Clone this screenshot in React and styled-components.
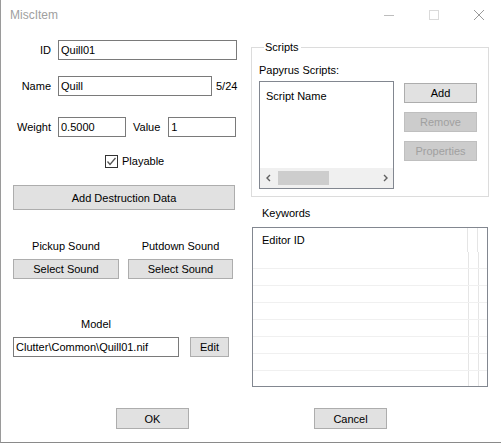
import React from "react";
import styled, { createGlobalStyle } from "styled-components";

const GlobalStyle = createGlobalStyle`
  html, body {
    margin: 0;
    padding: 0;
    background: #fff;
  }
  * {
    box-sizing: border-box;
  }
`;

function App() {
  return (
    <Window>
      <GlobalStyle />
      <TitleBar>
        <Title>MiscItem</Title>
        <Caption>
          <CaptionButton>
            <svg width="10" height="10" viewBox="0 0 10 10">
              <path d="M0 5.5h10" stroke="#bdbdbd" strokeWidth="1" />
            </svg>
          </CaptionButton>
          <CaptionButton>
            <svg width="10" height="10" viewBox="0 0 10 10">
              <rect x="0.5" y="0.5" width="9" height="9" fill="none" stroke="#dadada" />
            </svg>
          </CaptionButton>
          <CaptionButton>
            <svg width="10" height="10" viewBox="0 0 10 10">
              <path d="M0 0L10 10M10 0L0 10" stroke="#9a9a9a" strokeWidth="1" />
            </svg>
          </CaptionButton>
        </Caption>
      </TitleBar>

      <Content>
        <LeftColumn>
          <FieldRow $top={10}>
            <Label>ID</Label>
            <TextInput $width={179} defaultValue="Quill01" />
          </FieldRow>
          <FieldRow $top={16}>
            <Label>Name</Label>
            <TextInput $width={154} defaultValue="Quill" />
            <Counter>5/24</Counter>
          </FieldRow>
          <FieldRow $top={21}>
            <Label>Weight</Label>
            <TextInput $width={68} defaultValue="0.5000" />
            <InlineLabel>Value</InlineLabel>
            <TextInput $width={68} defaultValue="1" />
          </FieldRow>
          <CheckRow>
            <CheckBox>
              <svg width="11" height="11" viewBox="0 0 11 11">
                <path d="M1.5 5.5L4 8.5L9.5 2" fill="none" stroke="#555" strokeWidth="1.3" />
              </svg>
            </CheckBox>
            <span>Playable</span>
          </CheckRow>
          <WideButton>Add Destruction Data</WideButton>

          <SoundRow>
            <SoundBlock $width={106}>
              <CenterLabel>Pickup Sound</CenterLabel>
              <Button $width={106}>Select Sound</Button>
            </SoundBlock>
            <SoundBlock $width={105}>
              <CenterLabel>Putdown Sound</CenterLabel>
              <Button $width={105}>Select Sound</Button>
            </SoundBlock>
          </SoundRow>

          <ModelBlock>
            <ModelLabel>Model</ModelLabel>
            <ModelRow>
              <TextInput $width={166} defaultValue="Clutter\Common\Quill01.nif" />
              <Button $width={39}>Edit</Button>
            </ModelRow>
          </ModelBlock>
        </LeftColumn>

        <RightColumn>
          <GroupBox>
            <Legend>Scripts</Legend>
            <GroupLabel>Papyrus Scripts:</GroupLabel>
            <ScriptsRow>
              <ListBox $width={135} $height={108}>
                <ScriptHeader>Script Name</ScriptHeader>
                <HScroll>
                  <ScrollArrow>
                    <svg width="8" height="8" viewBox="0 0 8 8">
                      <path d="M5 1L2 4L5 7" fill="none" stroke="#606060" strokeWidth="1.4" />
                    </svg>
                  </ScrollArrow>
                  <ScrollTrack>
                    <ScrollThumb />
                  </ScrollTrack>
                  <ScrollArrow>
                    <svg width="8" height="8" viewBox="0 0 8 8">
                      <path d="M3 1L6 4L3 7" fill="none" stroke="#606060" strokeWidth="1.4" />
                    </svg>
                  </ScrollArrow>
                </HScroll>
              </ListBox>
              <ButtonStack>
                <Button $width={73}>Add</Button>
                <Button $width={73} disabled>
                  Remove
                </Button>
                <Button $width={73} disabled>
                  Properties
                </Button>
              </ButtonStack>
            </ScriptsRow>
          </GroupBox>

          <KeywordsLabel>Keywords</KeywordsLabel>
          <KeywordList $width={236} $height={160}>
            <GridHeader>
              <GridCell $width={215}>Editor ID</GridCell>
              <GridCell $width={3} />
            </GridHeader>
            {Array.from({ length: 8 }).map((_, i) => (
              <GridRow key={i}>
                <GridCell $width={216} />
                <GridCell $width={4} />
              </GridRow>
            ))}
          </KeywordList>
        </RightColumn>
      </Content>

      <Footer>
        <Button $width={73} $height={21}>
          OK
        </Button>
        <Button $width={73} $height={21}>
          Cancel
        </Button>
      </Footer>
    </Window>
  );
}

export default App;

const Window = styled.div`
  width: 501px;
  height: 443px;
  background: #fff;
  border-left: 1px solid #9a9a9a;
  border-bottom: 1px solid #8a8a8a;
  font-family: "Liberation Sans", Arial, sans-serif;
  font-size: 11px;
  color: #000;
  display: flex;
  flex-direction: column;
  overflow: hidden;
`;

const TitleBar = styled.div`
  height: 30px;
  display: flex;
  align-items: center;
  justify-content: space-between;
  flex-shrink: 0;
`;

const Title = styled.div`
  padding-left: 9px;
  font-size: 12px;
  color: #a0a0a0;
`;

const Caption = styled.div`
  display: flex;
  height: 30px;
`;

const CaptionButton = styled.div`
  width: 45px;
  height: 30px;
  display: flex;
  align-items: center;
  justify-content: center;
`;

const Content = styled.div`
  display: grid;
  grid-template-columns: 237px 250px;
  padding-left: 12px;
  align-items: start;
`;

const LeftColumn = styled.div`
  display: flex;
  flex-direction: column;
`;

const RightColumn = styled.div`
  display: flex;
  flex-direction: column;
`;

const FieldRow = styled.div`
  display: flex;
  align-items: center;
  height: 20px;
  margin-top: ${(p) => p.$top}px;
`;

const Label = styled.div`
  width: 38px;
  text-align: right;
  margin-right: 7px;
  line-height: 13px;
`;

const InlineLabel = styled.div`
  margin: 0 8px 0 7px;
  line-height: 13px;
`;

const Counter = styled.div`
  margin-left: 4px;
`;

const TextInput = styled.input`
  width: ${(p) => p.$width}px;
  height: 20px;
  border: 1px solid #7a7a7a;
  padding: 0 2px;
  font-family: "Liberation Sans", Arial, sans-serif;
  font-size: 11px;
  color: #000;
  background: #fff;
  outline: none;
  border-radius: 0;
`;

const CheckRow = styled.div`
  display: flex;
  align-items: center;
  gap: 4px;
  height: 13px;
  margin-top: 18px;
  padding-left: 92px;
  line-height: 13px;
`;

const CheckBox = styled.div`
  width: 13px;
  height: 13px;
  border: 1px solid #333;
  display: flex;
  align-items: center;
  justify-content: center;
  background: #fff;
`;

const Button = styled.button`
  width: ${(p) => p.$width}px;
  height: ${(p) => p.$height || 20}px;
  background: ${(p) => (p.disabled ? "#cccccc" : "#e1e1e1")};
  border: 1px solid ${(p) => (p.disabled ? "#bfbfbf" : "#adadad")};
  color: ${(p) => (p.disabled ? "#a0a0a0" : "#000")};
  font-family: "Liberation Sans", Arial, sans-serif;
  font-size: 11px;
  padding: 0;
  border-radius: 0;
  flex-shrink: 0;
`;

const WideButton = styled(Button)`
  width: 222px;
  height: 25px;
  margin-top: 17px;
`;

const SoundRow = styled.div`
  display: flex;
  gap: 9px;
  margin-top: 30px;
`;

const SoundBlock = styled.div`
  width: ${(p) => p.$width}px;
  display: flex;
  flex-direction: column;
  align-items: center;
  gap: 6px;
`;

const CenterLabel = styled.div`
  line-height: 13px;
  white-space: nowrap;
`;

const ModelBlock = styled.div`
  margin-top: 39px;
  display: flex;
  flex-direction: column;
  gap: 6px;
`;

const ModelLabel = styled.div`
  width: 166px;
  text-align: center;
  line-height: 13px;
`;

const ModelRow = styled.div`
  display: flex;
  gap: 11px;
`;

const GroupBox = styled.fieldset`
  margin: 11px 0 0 1px;
  width: 238px;
  border: 1px solid #dcdcdc;
  padding: 10px 7px 7px 7px;
`;

const Legend = styled.legend`
  margin-left: 5px;
  padding: 0 2px 0 1px;
  line-height: 13px;
`;

const GroupLabel = styled.div`
  line-height: 13px;
`;

const ScriptsRow = styled.div`
  display: flex;
  gap: 10px;
  margin-top: 4px;
`;

const ListBox = styled.div`
  width: ${(p) => p.$width}px;
  height: ${(p) => p.$height}px;
  border: 1px solid #828790;
  display: flex;
  flex-direction: column;
  overflow: hidden;
  flex-shrink: 0;
`;

const KeywordList = styled(ListBox)`
  margin: 7px 0 0 2px;
`;

const ScriptHeader = styled.div`
  flex: 1;
  padding: 8px 0 0 6px;
  line-height: 13px;
`;

const HScroll = styled.div`
  height: 20px;
  display: flex;
  background: #f0f0f0;
`;

const ScrollArrow = styled.div`
  width: 17px;
  display: flex;
  align-items: center;
  justify-content: center;
`;

const ScrollTrack = styled.div`
  flex: 1;
  display: flex;
  align-items: center;
`;

const ScrollThumb = styled.div`
  width: 51px;
  height: 14px;
  margin-left: 1px;
  background: #cdcdcd;
`;

const ButtonStack = styled.div`
  display: flex;
  flex-direction: column;
  gap: 9px;
  margin-top: 2px;
`;

const KeywordsLabel = styled.div`
  margin: 10px 0 0 12px;
  line-height: 13px;
`;

const GridHeader = styled.div`
  display: flex;
  height: 24px;
  flex-shrink: 0;
`;

const GridRow = styled.div`
  display: flex;
  height: 17px;
  flex-shrink: 0;
  border-bottom: 1px solid #f0f0f0;
`;

const GridCell = styled.div`
  width: ${(p) => p.$width}px;
  border-right: 1px solid #e5e5e5;
  padding-left: 9px;
  line-height: 24px;
  flex-shrink: 0;
`;

const Footer = styled.div`
  display: flex;
  gap: 125px;
  padding-left: 115px;
  margin-top: 21px;
`;
